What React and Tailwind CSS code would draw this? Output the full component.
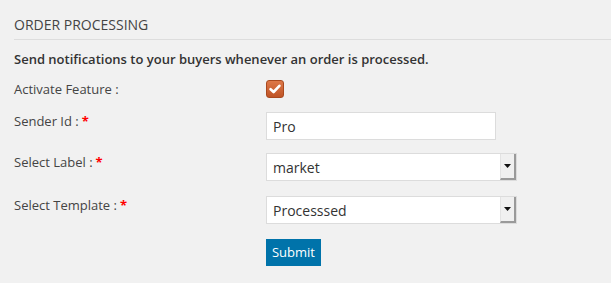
import React, { useState } from 'react';

function Arrow() {
  return (
    <div className="flex h-full w-[16px] items-center justify-center border-l border-[#e3e3e3] border-r-2 border-b-2 border-r-[#9a9a9a] border-b-[#9a9a9a] bg-[#f0f0f0]">
      <svg width="7" height="4" viewBox="0 0 7 4">
        <path d="M0 0 H7 L3.5 4 Z" fill="#111" />
      </svg>
    </div>
  );
}

function SelectBox({ value, width }) {
  return (
    <div className={`flex h-[28px] items-stretch border border-[#dcdcdc] bg-white ${width}`}>
      <div className="flex flex-1 items-center pl-[6px] text-[14px] text-[#333]">{value}</div>
      <Arrow />
    </div>
  );
}

function Label({ text, required }) {
  return (
    <div className="w-[252px] shrink-0 text-[13px] leading-[18px] text-[#444]">
      {text}
      {required && <span className="ml-[3px] font-bold text-[#ff0000]">*</span>}
    </div>
  );
}

export default function App() {
  const [sender, setSender] = useState('Pro');
  const [active, setActive] = useState(true);

  return (
    <div className="h-[283px] w-[611px] overflow-hidden bg-[#f1f1f1] pl-[14px] font-['Open_Sans',sans-serif]">
      <div className="border-b border-[#dddddd] pt-[15px] pb-[5px] text-[14px] leading-[19px] text-[#444]">
        ORDER PROCESSING
      </div>

      <p className="mt-[10px] text-[13px] font-semibold leading-[18px] text-[#333]">
        Send notifications to your buyers whenever an order is processed.
      </p>

      <div className="mt-[12px] flex items-start">
        <Label text="Activate Feature :" />
        <button
          type="button"
          onClick={() => setActive(!active)}
          className="flex h-[18px] w-[18px] items-center justify-center rounded-[3px] border border-[#a9491f] bg-gradient-to-b from-[#de7848] to-[#bf5426]"
        >
          {active && (
            <svg width="12" height="10" viewBox="0 0 12 10">
              <path d="M1.6 5.2 L4.6 8 L10.4 1.8" stroke="#fff" strokeWidth="2.6" fill="none" strokeLinecap="round" strokeLinejoin="round" />
            </svg>
          )}
        </button>
      </div>

      <div className="mt-[14px] flex items-start">
        <Label text="Sender Id :" required />
        <input
          value={sender}
          onChange={(e) => setSender(e.target.value)}
          className="h-[28px] w-[230px] border border-[#dcdcdc] bg-white px-[6px] text-[14px] text-[#333] outline-none"
        />
      </div>

      <div className="mt-[13px] flex items-start">
        <Label text="Select Label :" required />
        <SelectBox value="market" width="w-[251px]" />
      </div>

      <div className="mt-[15px] flex items-start">
        <Label text="Select Template :" required />
        <SelectBox value="Processsed" width="w-[251px]" />
      </div>

      <div className="mt-[15px] flex">
        <div className="w-[252px] shrink-0" />
        <button
          type="button"
          className="h-[27px] w-[55px] bg-[#0073aa] text-[13px] text-white"
        >
          Submit
        </button>
      </div>
    </div>
  );
}
